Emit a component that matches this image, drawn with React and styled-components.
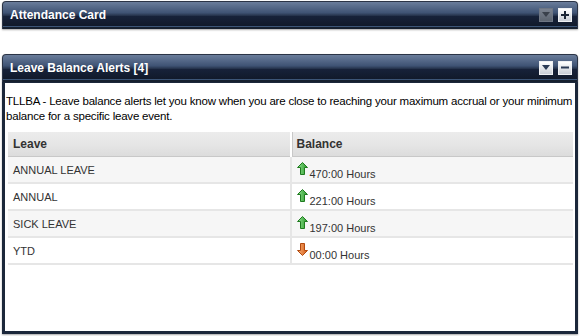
import React from "react";
import styled, { createGlobalStyle } from "styled-components";

const Global = createGlobalStyle`
  html, body { margin: 0; padding: 0; background: #fff; }
  body { font-family: "Liberation Sans", Arial, sans-serif; }
`;

const Page = styled.div`
  width: 580px;
  height: 336px;
  padding: 1px 2px 0 2px;
  box-sizing: border-box;
  display: flex;
  flex-direction: column;
  gap: 25px;
`;

const Panel = styled.section`
  display: flex;
  flex-direction: column;
  box-shadow: 0 1px 2px rgba(0, 0, 0, 0.35);
  border-radius: 4px 4px 0 0;
  ${(p) => p.$grow && "flex: 1; margin-bottom: 2px;"}
`;

const Header = styled.div`
  height: 28px;
  box-sizing: border-box;
  border: 1px solid #2b3446;
  border-bottom: none;
  border-radius: 4px 4px 0 0;
  background: linear-gradient(
    to bottom,
    #6a7d9b 0%,
    #3f5374 40%,
    #26344d 50%,
    #17223a 52%,
    #111a2b 88%,
    #3c5577 89%,
    #3c5577 93%,
    #16202f 94%
  );
  display: flex;
  align-items: center;
  padding: 0 5px 2px 7px;
`;

const Title = styled.h2`
  margin: 0;
  flex: 1;
  color: #fff;
  font-size: 12px;
  font-weight: bold;
`;

const Tools = styled.div`
  display: flex;
  gap: 5px;
`;

const ToolButton = styled.button`
  width: 14px;
  height: 14px;
  padding: 0;
  border: 1px solid ${(p) => (p.$disabled ? "#6e7684" : "#eef0f3")};
  background: ${(p) =>
    p.$disabled
      ? "linear-gradient(#7a8290, #5c6470)"
      : "linear-gradient(#ffffff, #c9ced6)"};
  display: flex;
  align-items: center;
  justify-content: center;
  box-sizing: border-box;
`;

const Body = styled.div`
  flex: 1;
  background: #fff;
  border: 3px solid #1b273a;
  border-top: 1px solid #1b273a;
  padding: 11px 0 0 1px;
`;

const Intro = styled.p`
  margin: 0 0 8px 0;
  font-size: 11.5px;
  line-height: 15px;
  letter-spacing: -0.2px;
  color: #000;
`;

const Table = styled.table`
  margin: 0 2px;
  width: calc(100% - 4px);
  border-collapse: collapse;
  font-size: 11px;
  color: #333;
`;

const Th = styled.th`
  text-align: left;
  height: 24px;
  padding: 0 5px;
  font-size: 12px;
  font-weight: bold;
  color: #333;
  background: linear-gradient(#ececec 0%, #e6e6e6 50%, #dcdcdc 100%);
  border-bottom: 1px solid #c8c8c8;
  border-left: ${(p) => (p.$first ? "none" : "2px solid #fff")};
  box-shadow: ${(p) => (p.$first ? "none" : "inset 1px 0 0 #c8c8c8")};
  width: ${(p) => p.$w || "auto"};
`;

const Row = styled.tr`
  background: ${(p) => (p.$odd ? "#f6f6f6" : "#fff")};
`;

const Td = styled.td`
  height: 25px;
  padding: 0 5px;
  border-bottom: 2px solid #e6e6e6;
  border-left: ${(p) => (p.$first ? "none" : "2px solid #e6e6e6")};
  vertical-align: middle;
`;

const Balance = styled.span`
  display: inline-flex;
  align-items: flex-end;
  gap: 2px;
  padding-top: 3px;
`;

const ArrowBox = styled.span`
  display: inline-block;
  margin-bottom: 5px;
  line-height: 0;
`;

const Arrow = ({ up }) => {
  const id = up ? "g-up" : "g-dn";
  return (
    <ArrowBox>
      <svg width="11" height="13" viewBox="0 0 11 13">
        <defs>
          <linearGradient id={id} x1="0" y1="0" x2="1" y2="0">
            <stop offset="0" stopColor={up ? "#8ee08e" : "#f8b27a"} />
            <stop offset="1" stopColor={up ? "#2a9a2a" : "#d45a14"} />
          </linearGradient>
        </defs>
        {up ? (
          <path
            d="M5.5 0.5 L10.5 5.5 L7.5 5.5 L7.5 12.5 L3.5 12.5 L3.5 5.5 L0.5 5.5 Z"
            fill={`url(#${id})`}
            stroke="#1f7a1f"
            strokeWidth="1"
            strokeLinejoin="round"
          />
        ) : (
          <path
            d="M3.5 0.5 L7.5 0.5 L7.5 7.5 L10.5 7.5 L5.5 12.5 L0.5 7.5 L3.5 7.5 Z"
            fill={`url(#${id})`}
            stroke="#b34a0e"
            strokeWidth="1"
            strokeLinejoin="round"
          />
        )}
      </svg>
    </ArrowBox>
  );
};

const DownGlyph = ({ color }) => (
  <svg width="8" height="5" viewBox="0 0 8 5">
    <path d="M0 0 H8 L4 5 Z" fill={color} />
  </svg>
);

const PlusGlyph = () => (
  <svg width="8" height="8" viewBox="0 0 8 8">
    <path d="M3 0 H5 V3 H8 V5 H5 V8 H3 V5 H0 V3 H3 Z" fill="#1c2636" />
  </svg>
);

const MinusGlyph = () => (
  <svg width="8" height="3" viewBox="0 0 8 3">
    <rect width="8" height="2" y="0.5" fill="#2a3a55" />
  </svg>
);

const leaves = [
  { name: "ANNUAL LEAVE", hours: "470:00 Hours", up: true },
  { name: "ANNUAL", hours: "221:00 Hours", up: true },
  { name: "SICK LEAVE", hours: "197:00 Hours", up: true },
  { name: "YTD", hours: "00:00 Hours", up: false },
];

export default function App() {
  return (
    <>
      <Global />
      <Page>
        <Panel>
          <Header>
            <Title>Attendance Card</Title>
            <Tools>
              <ToolButton $disabled>
                <DownGlyph color="#3a414c" />
              </ToolButton>
              <ToolButton>
                <PlusGlyph />
              </ToolButton>
            </Tools>
          </Header>
        </Panel>

        <Panel $grow>
          <Header>
            <Title>Leave Balance Alerts [4]</Title>
            <Tools>
              <ToolButton>
                <DownGlyph color="#2a3a55" />
              </ToolButton>
              <ToolButton>
                <MinusGlyph />
              </ToolButton>
            </Tools>
          </Header>
          <Body>
            <Intro>
              TLLBA - Leave balance alerts let you know when you are close to
              reaching your maximum accrual or your minimum balance for a
              specific leave event.
            </Intro>
            <Table>
              <thead>
                <tr>
                  <Th $first $w="50%">Leave</Th>
                  <Th>Balance</Th>
                </tr>
              </thead>
              <tbody>
                {leaves.map((l, i) => (
                  <Row key={l.name} $odd={i % 2 === 0}>
                    <Td $first>{l.name}</Td>
                    <Td>
                      <Balance>
                        <Arrow up={l.up} />
                        {l.hours}
                      </Balance>
                    </Td>
                  </Row>
                ))}
              </tbody>
            </Table>
          </Body>
        </Panel>
      </Page>
    </>
  );
}
